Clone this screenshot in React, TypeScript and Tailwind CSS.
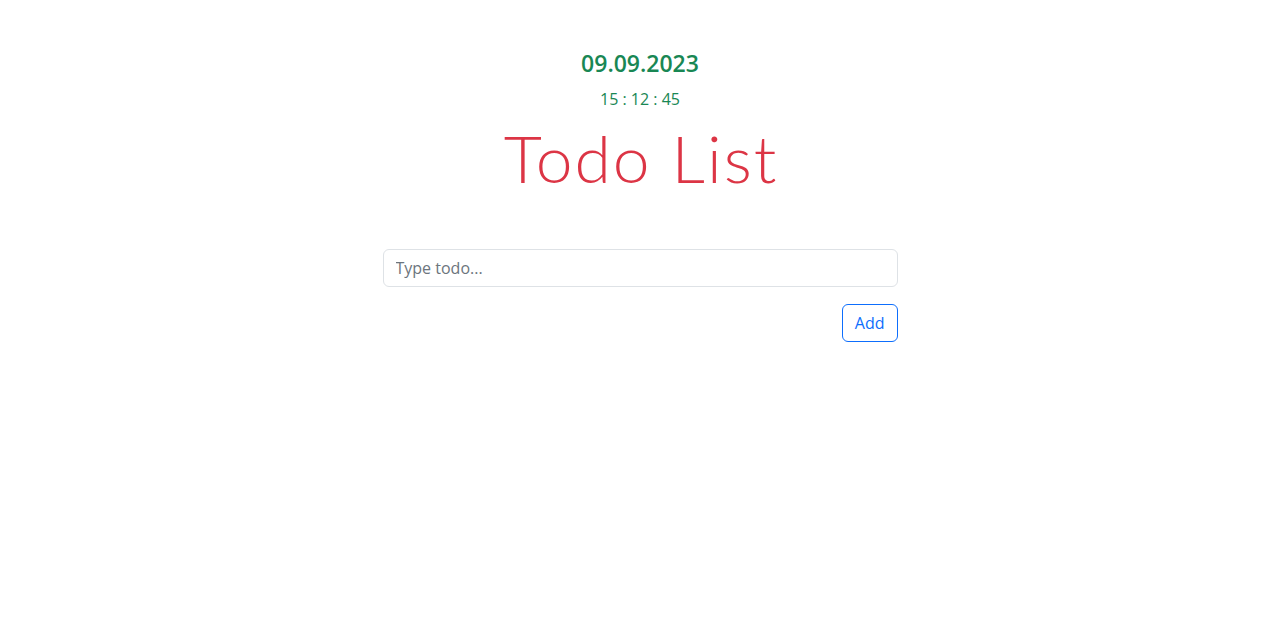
export default function App() {
  return (
    <div className="min-h-[620px] bg-white flex flex-col items-center" style={{ fontFamily: '"Open Sans", "Noto Sans", sans-serif' }}>
      <div className="mt-[48px] text-[23px] leading-[30px] font-semibold text-[#198754]">09.09.2023</div>
      <div className="mt-[9px] text-[16px] leading-[24px] text-[#198754]">15 : 12 : 45</div>
      <h1 className="mt-[7px] pl-[2px] text-[66px] leading-[80px] tracking-[2px] font-light text-[#dc3545]" style={{ fontFamily: 'Lato, "Open Sans", sans-serif' }}>Todo List</h1>
      <div className="mt-[51px] w-[515px] flex flex-col items-end">
        <input
          className="w-full h-[38px] px-[12px] text-[16px] border border-[#dee2e6] rounded-[6px] text-[#212529] placeholder:text-[#6c757d] outline-none"
          placeholder="Type todo..."
        />
        <button className="mt-[17px] h-[38px] px-[12px] text-[16px] text-[#0d6efd] border border-[#0d6efd] rounded-[6px] bg-white">
          Add
        </button>
      </div>
    </div>
  );
}
